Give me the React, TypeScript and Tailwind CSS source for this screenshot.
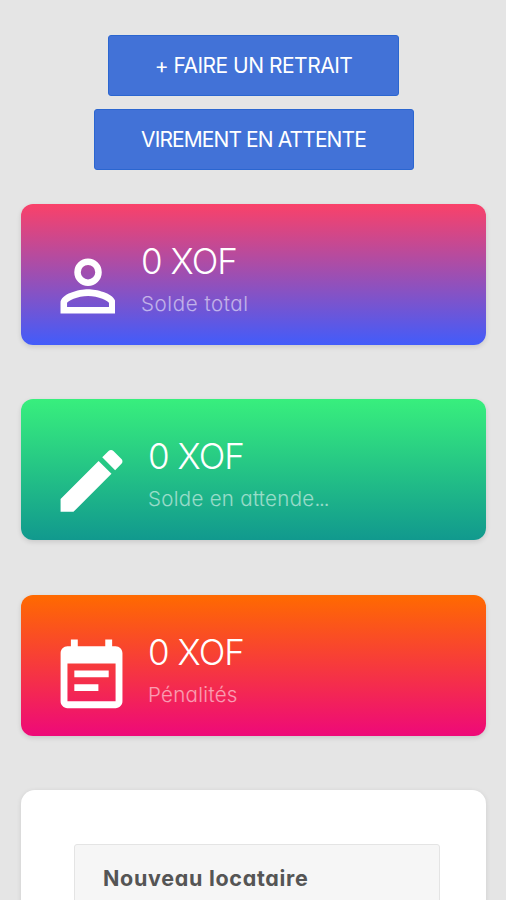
import type { ReactNode } from 'react';

type StatCardProps = {
  gradient: string;
  icon: ReactNode;
  amount: string;
  label: ReactNode;
  labelClass: string;
};

const AccountIcon = () => (
  <svg className="h-[82.5px] w-[55px] shrink-0" viewBox="3.85 0.1 16 24" fill="currentColor">
    <path d="M12,13C9.33,13 4,14.33 4,17V20H20V17C20,14.33 14.67,13 12,13M12,4A4,4 0 0,0 8,8A4,4 0 0,0 12,12A4,4 0 0,0 16,8A4,4 0 0,0 12,4M12,14.9C14.97,14.9 18.1,16.36 18.1,17V18.1H5.9V17C5.9,16.36 9,14.9 12,14.9M12,5.9A2.1,2.1 0 0,1 14.1,8A2.1,2.1 0 0,1 12,10.1A2.1,2.1 0 0,1 9.9,8A2.1,2.1 0 0,1 12,5.9Z" overflow="visible" />
  </svg>
);

const PencilIcon = () => (
  <svg className="h-[82.5px] w-[62px] shrink-0 overflow-visible" viewBox="2.85 0.1 18 24" fill="currentColor">
    <path d="M20.71,7.04C21.1,6.65 21.1,6 20.71,5.63L18.37,3.29C18,2.9 17.35,2.9 16.96,3.29L15.12,5.12L18.87,8.87M3,17.25V21H6.75L17.81,9.93L14.06,6.18L3,17.25Z" />
  </svg>
);

const CalendarIcon = () => (
  <svg className="h-[82.5px] w-[62px] shrink-0 overflow-visible" viewBox="2.85 0 18 24" fill="currentColor">
    <path d="M17 10H7v2h10v-2zm2-7h-1V1h-2v2H8V1H6v2H5c-1.11 0-1.99.9-1.99 2L3 19c0 1.1.89 2 2 2h14c1.1 0 2-.9 2-2V5c0-1.1-.9-2-2-2zm0 16H5V8h14v11zm-5-5H7v2h7v-2z" />
  </svg>
);

function StatCard({ gradient, icon, amount, label, labelClass }: StatCardProps) {
  return (
    <div
      className={`flex h-[141px] items-start gap-[26px] rounded-[12px] pt-[39px] pl-[39px] text-white shadow-[0_2px_5px_rgba(0,0,0,0.12)] ${gradient}`}
    >
      <div className="pt-[2px]">{icon}</div>
      <div>
        <h2 className="text-[35px] leading-[36px] font-light tracking-[-1px] whitespace-nowrap">{amount}</h2>
        <span className={`mt-[11px] block text-[20.5px] leading-7 font-light whitespace-nowrap text-white/55 ${labelClass}`}>
          {label}
        </span>
      </div>
    </div>
  );
}

export default function App() {
  return (
    <div className="h-[900px] overflow-hidden bg-[#e5e5e5] pr-5 pl-[21px] pt-[35px] font-['Inter',sans-serif] [font-feature-settings:'cv11']">
      <div className="flex flex-col items-center gap-[14px]">
        <button className="h-[61px] w-[291px] rounded-[3px] border border-[#2b66d0] bg-[#4272d7] text-[21px] whitespace-nowrap text-white">
          <span className="tracking-[-0.5px]">+ FAIRE UN RETRAIT</span>
        </button>
        <button className="-mt-px h-[61px] w-[320px] rounded-[3px] border border-[#2b66d0] bg-[#4272d7] text-[21px] whitespace-nowrap text-white">
          <span className="tracking-[-0.9px]">VIREMENT EN ATTENTE</span>
        </button>
      </div>

      <div className="mt-[34px] flex flex-col gap-[54.3px]">
        <StatCard
          gradient="bg-linear-to-b/srgb from-[#fa4169] to-[#425cfa]"
          icon={<AccountIcon />}
          amount="0 XOF"
          label="Solde total"
          labelClass="tracking-[0.6px]"
        />
        <StatCard
          gradient="bg-linear-to-b/srgb from-[#38ef7d] to-[#11998e]"
          icon={<PencilIcon />}
          amount="0 XOF"
          label={<>Solde en attende<span className="tracking-[-1.2px]">...</span></>}
          labelClass="tracking-[0.3px]"
        />
        <StatCard
          gradient="bg-linear-to-b/srgb from-[#ff6a00] to-[#ee0979]"
          icon={<CalendarIcon />}
          amount="0 XOF"
          label="Pénalités"
          labelClass="tracking-[0.3px]"
        />
      </div>

      <div className="mt-[54.4px] h-[200px] rounded-[14px] bg-white px-[53px] pt-[54px] shadow-[0_1px_5px_rgba(0,0,0,0.1)]">
        <div className="-mr-[7px] h-[146px] w-[366px] rounded-t-[3px] border border-[#e4e4e4] bg-[#f6f6f6] pt-[18px] pl-[28px]">
          <strong className="block text-[21.5px] leading-[30px] font-bold tracking-[0.7px] whitespace-nowrap text-[#555]">
            Nouveau locataire
          </strong>
        </div>
      </div>
    </div>
  );
}
